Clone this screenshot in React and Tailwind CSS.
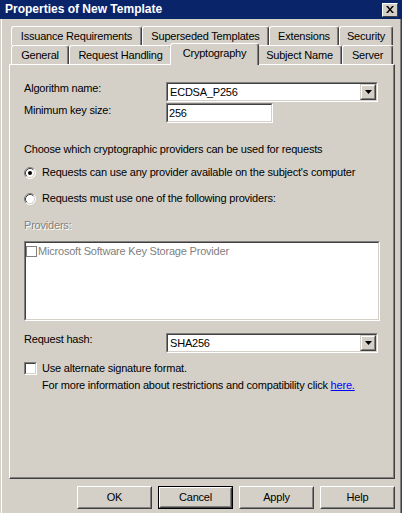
import React from "react";

// classic 3D borders
const sunkenOuter = "border border-t-[#808080] border-l-[#808080] border-b-white border-r-white";
const sunkenInner = "border border-t-[#404040] border-l-[#404040] border-b-[#d4d0c8] border-r-[#d4d0c8] bg-white";

function Tab({ label, className, selected }) {
  return (
    <div
      className={`${className} ${
        selected ? "h-[22px] -mx-[2px] -mb-px relative z-10 pb-[3px]" : "h-[19px]"
      } bg-[#d4d0c8] border-t border-l border-t-white border-l-white border-r border-r-[#404040] shadow-[inset_-1px_0_0_#808080] rounded-t-[3px] flex items-center justify-center whitespace-nowrap`}
    >
      {label}
    </div>
  );
}

function Select({ value, className }) {
  return (
    <div className={`${sunkenOuter} ${className} h-[20px]`}>
      <div className={`${sunkenInner} h-full flex items-center pl-[2px]`}>
        <span className="flex-1">{value}</span>
        <div className="w-[16px] h-[16px] border border-t-[#d4d0c8] border-l-[#d4d0c8] border-b-[#404040] border-r-[#404040] bg-[#d4d0c8]">
          <div className="h-full border border-t-white border-l-white border-b-[#808080] border-r-[#808080] flex items-center justify-center">
            <svg width="7" height="4" viewBox="0 0 7 4">
              <path d="M0 0h7L3.5 4z" fill="#000" />
            </svg>
          </div>
        </div>
      </div>
    </div>
  );
}

function Radio({ checked }) {
  return (
    <svg width="12" height="12" viewBox="0 0 12 12" className="shrink-0">
      <circle cx="6" cy="6" r="5" fill="#fff" />
      <path d="M2.11 9.89A5.5 5.5 0 0 1 9.89 2.11" stroke="#808080" fill="none" />
      <path d="M2.82 9.18A4.5 4.5 0 0 1 9.18 2.82" stroke="#404040" fill="none" />
      <path d="M9.89 2.11A5.5 5.5 0 0 1 2.11 9.89" stroke="#fff" fill="none" />
      <path d="M9.18 2.82A4.5 4.5 0 0 1 2.82 9.18" stroke="#d4d0c8" fill="none" />
      {checked && <circle cx="6" cy="6" r="2" fill="#000" />}
    </svg>
  );
}

function Button({ label, isDefault }) {
  return (
    <div className={`w-[75px] h-[23px] ${isDefault ? "border border-black" : ""}`}>
      <div className="h-full border border-t-white border-l-white border-b-[#404040] border-r-[#404040]">
        <div className="h-full border border-t-[#d4d0c8] border-l-[#d4d0c8] border-b-[#808080] border-r-[#808080] flex items-center justify-center">
          {label}
        </div>
      </div>
    </div>
  );
}

export default function App() {
  return (
    <div className="w-[405px] h-[513px] overflow-hidden bg-white flex font-['Liberation_Sans',Arial,sans-serif] text-[11px] leading-[13px] tracking-[-0.2px] text-black">
      <div className="w-[402px] h-full bg-[#d4d0c8] flex flex-col">
        {/* Title bar */}
        <div className="h-[19px] bg-[#0a246a] flex items-center justify-between pl-[5px] pr-[4px]">
          <span className="text-white font-bold text-[12px] tracking-normal">Properties of New Template</span>
          <div className="w-[16px] h-[14px] border border-t-white border-l-white border-b-[#404040] border-r-[#404040] bg-[#d4d0c8] flex items-center justify-center">
            <svg width="8" height="7" viewBox="0 0 8 7">
              <path d="M0 0h2l2 2.5L6 0h2L5 3.5 8 7H6L4 4.5 2 7H0l3-3.5z" fill="#000" />
            </svg>
          </div>
        </div>

        {/* Body */}
        <div className="flex-1 border-l border-l-white ml-px border-r border-r-[#404040]">
          <div className="h-full border-r border-r-[#808080] pt-[7px] pl-[7px]">
            {/* Tabs */}
            <div className="pl-[2px]">
              <div className="flex">
                <Tab className="w-[131px]" label="Issuance Requirements" />
                <Tab className="w-[127px]" label="Superseded Templates" />
                <Tab className="w-[70px]" label="Extensions" />
                <Tab className="w-[54px]" label="Security" />
              </div>
              <div className="flex items-end h-[19px]">
                <Tab className="w-[58px]" label="General" />
                <Tab className="w-[103px]" label="Request Handling" />
                <Tab className="w-[89px]" label="Cryptography" selected />
                <Tab className="w-[85px]" label="Subject Name" />
                <Tab className="w-[51px]" label="Server" />
              </div>
            </div>

            {/* Panel */}
            <div className="w-[386px] h-[415px] border-t border-l border-t-white border-l-white border-r border-b border-r-[#404040] border-b-[#404040]">
              <div className="h-full border-r border-b border-r-[#808080] border-b-[#808080] pl-[14px] pt-[17px]">
                <div className="flex items-start">
                  <span className="w-[142px]">Algorithm name:</span>
                  <Select className="w-[212px]" value="ECDSA_P256" />
                </div>
                <div className="flex items-start mt-px">
                  <span className="w-[142px] pt-px">Minimum key size:</span>
                  <div className={`${sunkenOuter} w-[107px] h-[20px]`}>
                    <div className={`${sunkenInner} h-full flex items-center pl-px`}>256</div>
                  </div>
                </div>

                <p className="mt-[20px]">Choose which cryptographic providers can be used for requests</p>

                <div className="flex items-center gap-[6px] mt-[10px]">
                  <Radio checked />
                  <span>Requests can use any provider available on the subject's computer</span>
                </div>
                <div className="flex items-center gap-[6px] mt-[13px]">
                  <Radio />
                  <span>Requests must use one of the following providers:</span>
                </div>

                <p className="mt-[14px] text-[#808080] [text-shadow:1px_1px_0_#fff]">Providers:</p>

                <div className={`${sunkenOuter} w-[356px] h-[80px] mt-[9px]`}>
                  <div className={`${sunkenInner} h-full pt-[2px]`}>
                    <div className="flex items-center text-[#808080]">
                      <span className="w-[11px] h-[11px] border border-[#808080] bg-white shrink-0" />
                      <span className="ml-px">Microsoft Software Key Storage Provider</span>
                    </div>
                  </div>
                </div>

                <div className="flex items-start mt-[12px]">
                  <span className="w-[142px]">Request hash:</span>
                  <Select className="w-[212px]" value="SHA256" />
                </div>

                <div className="flex items-start gap-[5px] mt-[9px]">
                  <div className={`${sunkenOuter} w-[13px] h-[13px] shrink-0`}>
                    <div className={`${sunkenInner} h-full`} />
                  </div>
                  <span>Use alternate signature format.</span>
                </div>
                <p className="pl-[18px] mt-[4px]">
                  For more information about restrictions and compatibility click{" "}
                  <span className="text-[#0000ff] underline">here.</span>
                </p>
              </div>
            </div>

            {/* Buttons */}
            <div className="w-[386px] flex justify-end gap-[6px] mt-[7px]">
              <Button label="OK" />
              <Button label="Cancel" isDefault />
              <Button label="Apply" />
              <Button label="Help" />
            </div>
          </div>
        </div>
      </div>
    </div>
  );
}
